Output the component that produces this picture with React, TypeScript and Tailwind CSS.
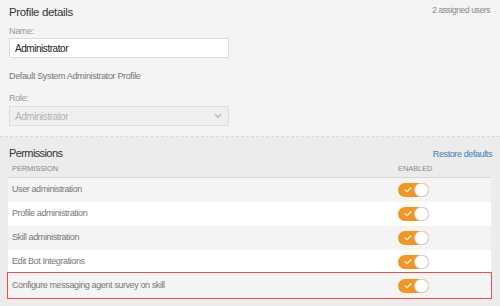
import { Check, ChevronDown } from "lucide-react";

const permissions = [
  "User administration",
  "Profile administration",
  "Skill administration",
  "Edit Bot Integrations",
  "Configure messaging agent survey on skill",
];

function Toggle() {
  return (
    <div className="relative h-[14px] w-[31px] rounded-full bg-[#f7941e]">
      <Check className="absolute left-[6px] top-[3px] h-[8px] w-[8px] text-white" strokeWidth={4} />
      <div className="absolute right-0 top-0 h-[14px] w-[15px] rounded-full border border-[#d4d4d4] bg-white" />
    </div>
  );
}

export default function App() {
  return (
    <div className="h-[306px] w-[500px] overflow-hidden bg-[#ececec] font-['Liberation_Sans',Arial,sans-serif]">
      <div className="h-[137px] border-b border-dashed border-[#d8d8d8] bg-[#f4f4f4] px-[9px] pt-[4px]">
        <div className="flex items-start justify-between">
          <h1 className="text-[11.5px] leading-[16px] tracking-[-0.35px] text-[#333]">Profile details</h1>
          <span className="mr-[1px] mt-[-1px] text-[8.5px] leading-[14px] tracking-[-0.4px] text-[#888]">
            2 assigned users
          </span>
        </div>
        <div className="mt-[5px] text-[9px] leading-[12px] tracking-[-0.35px] text-[#999]">Name:</div>
        <div className="mt-[1px] flex h-[20px] w-[220px] items-center border border-[#dcdcdc] bg-white px-[5px] text-[10px] tracking-[-0.45px] text-[#222]">
          Administrator
        </div>
        <div className="mt-[12px] text-[9px] leading-[12px] tracking-[-0.35px] text-[#777]">
          Default System Administrator Profile
        </div>
        <div className="mt-[10px] text-[9px] leading-[12px] tracking-[-0.35px] text-[#999]">Role:</div>
        <div className="mt-[2px] flex h-[20px] w-[220px] items-center justify-between border border-[#dcdcdc] bg-[#efefef] px-[5px] text-[10px] tracking-[-0.45px] text-[#b3b3b3]">
          <span>Administrator</span>
          <ChevronDown className="h-[10px] w-[10px] text-[#bbb]" strokeWidth={4} />
        </div>
      </div>
      <div className="px-[8px] pt-[8px]">
        <div className="flex items-end justify-between pl-[1px]">
          <h2 className="text-[11px] leading-[16px] tracking-[-0.6px] text-[#333]">Permissions</h2>
          <span className="text-[9px] leading-[14px] tracking-[-0.4px] text-[#3a80b8]">Restore defaults</span>
        </div>
        <div className="w-[483px]">
          <div className="flex h-[17px] items-start border-b border-[#d6d6d6] pt-[3px] text-[7.5px] leading-[10px] tracking-[-0.1px] text-[#888]">
            <span className="flex-1 pl-[4px]">PERMISSION</span>
            <span className="w-[93px]">ENABLED</span>
          </div>
          {permissions.map((p, i) => (
            <div
              key={p}
              className={`flex h-[24px] items-center text-[9px] tracking-[-0.4px] text-[#777] ${
                i % 2 === 0 ? "bg-[#f4f4f4]" : "bg-white"
              } ${
                i === permissions.length - 1
                  ? "mt-[-1px] h-[25px] outline outline-[1.5px] outline-[#ee4b4b] outline-offset-[0.5px]"
                  : ""
              }`}
            >
              <span className="flex-1 pl-[4px]">{p}</span>
              <div className="w-[93px]">
                <Toggle />
              </div>
            </div>
          ))}
        </div>
      </div>
    </div>
  );
}
